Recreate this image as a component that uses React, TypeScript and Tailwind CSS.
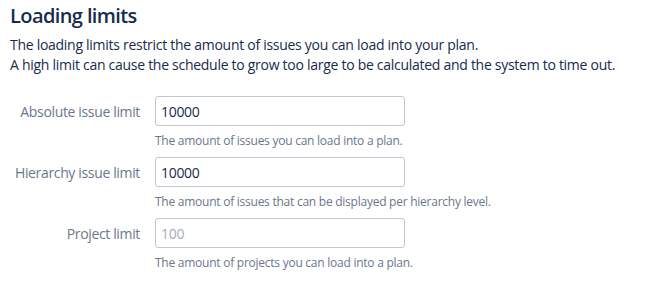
import React from 'react'

type Row = { label: string; value: string; help: string; disabled?: boolean }

const rows: Row[] = [
  { label: 'Absolute issue limit', value: '10000', help: 'The amount of issues you can load into a plan.' },
  { label: 'Hierarchy issue limit', value: '10000', help: 'The amount of issues that can be displayed per hierarchy level.' },
  { label: 'Project limit', value: '', help: 'The amount of projects you can load into a plan.', disabled: true },
]

export default function App() {
  return (
    <div className="w-[655px] h-[308px] bg-white px-[10px] text-[#172b4d] font-['Open_Sans',sans-serif] overflow-hidden">
      <h2 className="pt-[2px] text-[20px] leading-[28px] font-semibold tracking-[-0.6px]">Loading limits</h2>
      <p className="mt-[5px] text-[14px] leading-[20px] tracking-[-0.28px]">
        The loading limits restrict the amount of issues you can load into your plan.
        <br />
        A high limit can cause the schedule to grow too large to be calculated and the system to time out.
      </p>

      <div className="mt-[21px] flex flex-col gap-[6px]">
        {rows.map((r) => (
          <div key={r.label} className="flex">
            <label className="w-[130px] shrink-0 h-[30px] flex items-center justify-end text-[14px] text-[#6b778c] tracking-[-0.35px]">
              {r.label}
            </label>
            <div className="ml-[15px] flex flex-col">
              <input
                readOnly
                defaultValue={r.value}
                placeholder={r.disabled ? '100' : undefined}
                className="w-[250px] h-[30px] px-[5px] border border-[#c1c7d0] rounded-[3px] text-[14px] text-[#172b4d] placeholder:text-[#a5adba] outline-none tracking-[-0.3px]"
              />
              <span className="mt-[5px] text-[12px] leading-[20px] text-[#6b778c] tracking-[-0.25px]">{r.help}</span>
            </div>
          </div>
        ))}
      </div>
    </div>
  )
}
